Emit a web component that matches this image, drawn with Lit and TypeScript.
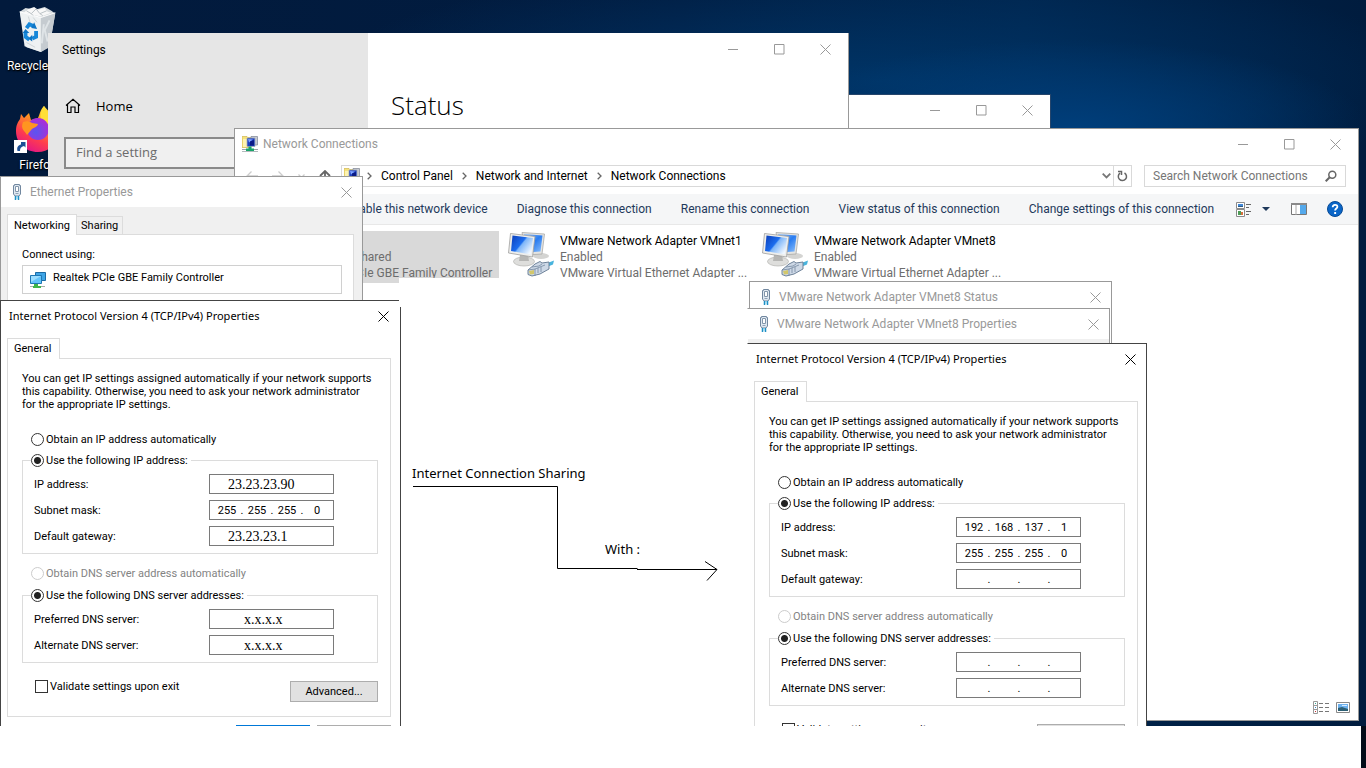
import { LitElement, html, css, svg, nothing } from "lit";
import { customElement, property } from "lit/decorators.js";
import { classMap } from "lit/directives/class-map.js";

const base = css`
  :host {
    display: block;
    box-sizing: border-box;
    font: 12px/16px Roboto, "Open Sans", sans-serif;
    color: #000;
  }
  *,
  *::before,
  *::after {
    box-sizing: border-box;
  }
  button,
  input {
    font: inherit;
    color: inherit;
    margin: 0;
  }
  button {
    border: 0;
    padding: 0;
    background: none;
    white-space: nowrap;
  }
  svg {
    display: block;
    flex: none;
  }
  p,
  h1,
  h2,
  figure {
    margin: 0;
    font: inherit;
  }
`;

const minimizeIcon = svg`<svg width="10" height="11" viewBox="0 0 10 11"><path d="M0 5.5h10" stroke="currentColor" fill="none"/></svg>`;
const maximizeIcon = svg`<svg width="11" height="11" viewBox="0 0 11 11"><path d="M.5 .5h9.500v9.500h-9.500z" stroke="currentColor" fill="none"/></svg>`;
const closeIcon = svg`<svg width="11" height="11" viewBox="0 0 11 11"><path d="M.5 .5l10 10M10.500 .5l-10 10" stroke="currentColor" fill="none"/></svg>`;

const plugIcon = svg`<svg width="10" height="16" viewBox="0 0 10 16">
  <path d="M2.500 .5h5v1h1v8.500l-1.500 2h-4L1.500 10V1.500h1z" fill="#dfe8f1" stroke="#71879f"/>
  <path d="M3.500 2.500h3v5h-3z" fill="#fff" stroke="#8296ab"/>
  <path d="M3.500 9.500h3" stroke="#8fa3b7"/>
  <path d="M3.500 12v4M6.500 12v4" stroke="#1f8fc4" stroke-width="1.500"/>
  <path d="M5 12v3" stroke="#7fd0f0"/></svg>`;

const networkFolderIcon = svg`<svg width="16" height="16" viewBox="0 0 16 16">
  <path d="M0 .5h5l1 1h3v10H0z" fill="#f5e27c" stroke="#c9ad3f" stroke-width=".6"/>
  <path d="M1 3h4v8H1z" fill="#fdf3b0"/>
  <path d="M9 .5h6.500v8.500H9z" fill="#c6cad2" stroke="#7d8492" stroke-width=".7"/>
  <path d="M5 2h8v8.500H5z" fill="#1b3fc0" stroke="#a5acb8" stroke-width=".8"/>
  <path d="M6 3l5 .5-4 3z" fill="#7fa4ff"/>
  <path d="M8 5.500l4-1.500v5.500H8z" fill="#0a1a86"/>
  <path d="M6.500 10.500h3v2H12v2.500H4v-2.500h2.500z" fill="#19a56a"/>
  <path d="M0 13h4v1H0zM12 13h4v1h-4zM0 15h16v.8H0z" fill="#9aa4a8"/></svg>`;

const adapterIcon = svg`<svg width="48" height="48" viewBox="0 0 48 48">
  <defs>
    <linearGradient id="scr" x1="0" y1="0" x2="1" y2=".7">
      <stop offset="0" stop-color="#0a3cb8"/><stop offset=".5" stop-color="#1c6dee"/>
      <stop offset=".56" stop-color="#7db5f8"/><stop offset="1" stop-color="#f0f7ff"/>
    </linearGradient>
    <linearGradient id="scr2" x1="0" y1="0" x2="1" y2="1">
      <stop offset="0" stop-color="#9cc5f6"/><stop offset=".5" stop-color="#2a7cf0"/><stop offset="1" stop-color="#8fc2fb"/>
    </linearGradient>
  </defs>
  <ellipse cx="34" cy="25" rx="8" ry="3" fill="#d4d4d2"/>
  <path d="M15 1.500l22.500 1.500-2.500 20-16 1z" fill="#e4e4e2" stroke="#a9a9a7" stroke-width=".8"/>
  <path d="M17 3l18.500 1.500-2 16-15 1z" fill="url(#scr2)"/>
  <ellipse cx="17" cy="30.500" rx="10.500" ry="4.500" fill="#dededc" stroke="#b4b4b2" stroke-width=".7"/>
  <path d="M13 24h8l1 6H12z" fill="#b6b6b4"/>
  <path d="M3.500 2.500l24.500 3-2.500 20.500L1.500 22z" fill="#eeeeec" stroke="#a0a09e" stroke-width=".8"/>
  <path d="M5.500 4.500l20.500 2.500-2 16.500-20-3.500z" fill="url(#scr)"/>
  <path d="M38 33l9-3.500-1 4-6 2.500z" fill="#49b4dd"/>
  <path d="M21 39l7-6 5-2.500 2 1.500 7-1v7l-9 5-8 2-4-1.500z" fill="#cdd8e6" stroke="#6e8299"/>
  <path d="M21 39l7-1v7M28 38l10-4M25 36l7-1 3-2M31 37v5M34 36v5" stroke="#7488a0" fill="none" stroke-width=".8"/>
  <path d="M22 40l5-1v4l-4 .5z" fill="#d2c76b"/></svg>`;

const nicIcon = svg`<svg width="16" height="16" viewBox="0 0 16 16">
  <path d="M5.500 .5h10v8h-10z" fill="#3fa5e6" stroke="#1b6ba5"/>
  <path d="M.5 3.500h11v8H.5z" fill="#64c4fa" stroke="#1f77b4"/>
  <path d="M1 4h10L1 10z" fill="#9cddff"/>
  <path d="M4 12h4v2h3v2H3v-2h1z" fill="#3fb54a"/>
  <path d="M0 14h3v1H0zM11 14h4v1h-4z" fill="#a8b0a8"/></svg>`;

/** Title bar shared by every window on the desktop. */
@customElement("title-bar")
class TitleBar extends LitElement {
  @property() label = "";
  @property() icon = "";
  @property({ type: Boolean }) active = false;
  @property({ type: Boolean }) resizable = false;

  static styles = [
    base,
    css`
      .bar {
        display: flex;
        align-items: center;
        height: 30px;
        gap: 5px;
        color: #999;
      }
      .active {
        color: #000;
      }
      .active .name {
        font: 11px/16px "Noto Sans", sans-serif;
      }
      .icon {
        width: 16px;
        display: grid;
        place-items: center;
        margin-left: 8px;
      }
      .network {
        margin-left: 7px;
      }
      .name {
        white-space: nowrap;
      }
      .name:first-child {
        margin-left: 8px;
      }
      .controls {
        display: flex;
        margin-left: auto;
      }
      .controls button {
        width: 46px;
        height: 30px;
        display: grid;
        place-items: center;
      }
      .small button {
        width: 32px;
      }
    `,
  ];

  render() {
    const icons: Record<string, unknown> = { plug: plugIcon, network: networkFolderIcon };
    return html`<div class=${classMap({ bar: true, active: this.active })}>
      ${this.icon ? html`<span class="icon ${this.icon}">${icons[this.icon]}</span>` : nothing}
      <h2 class="name">${this.label}</h2>
      <div class=${classMap({ controls: true, small: !this.resizable })}>
        ${this.resizable
          ? html`<button aria-label="Minimize">${minimizeIcon}</button>
              <button aria-label="Maximize">${maximizeIcon}</button>`
          : nothing}
        <button aria-label="Close">${closeIcon}</button>
      </div>
    </div>`;
  }
}

interface Field {
  label: string;
  octets?: string[];
  note?: string;
}

/** Internet Protocol Version 4 property sheet. */
@customElement("ip-properties")
class IpProperties extends LitElement {
  @property({ attribute: false }) address: Field[] = [];
  @property({ attribute: false }) dns: Field[] = [];

  static styles = [
    base,
    css`
      :host {
        background: #f0f0f0;
      }
      title-bar {
        background: #fff;
      }
      .body {
        padding: 7px 8px 9px 6px;
        font-size: 11px;
        line-height: 13px;
      }
      .tab {
        display: block;
        position: relative;
        height: 21px;
        padding: 0 8px 1px 6px;
        border: 1px solid #dcdcdc;
        border-bottom: 0;
        background: #fff;
        margin-bottom: -1px;
        z-index: 1;
      }
      .panel {
        background: #fff;
        border: 1px solid #dcdcdc;
        padding: 13px 12px 14px 14px;
      }
      .intro {
        margin-bottom: 22px;
        white-space: nowrap;
      }
      label.choice {
        display: flex;
        align-items: center;
        gap: 2px;
        height: 13px;
        width: max-content;
      }
      .choice.lone {
        margin-left: 9px;
      }
      .choice.off {
        color: #838383;
      }
      .dns {
        margin-top: 13px;
      }
      input[type="radio"],
      input[type="checkbox"] {
        appearance: none;
        width: 13px;
        height: 13px;
        border: 1px solid #333;
        background: #fff;
      }
      input[type="radio"] {
        border-radius: 50%;
      }
      input[type="radio"]:checked {
        background: radial-gradient(circle, #222 0 3px, #fff 4px);
      }
      input[type="radio"]:disabled {
        border-color: #ccc;
      }
      fieldset {
        margin: 8px 0 0;
        min-width: 0;
        border: 1px solid #dcdcdc;
        padding: 7px 43px 7px 8px;
        display: grid;
        gap: 6px;
      }
      .dns + fieldset {
        margin-top: 9px;
      }
      legend {
        padding: 0 3px 0 0;
        background: #fff;
      }
      .row {
        display: flex;
        align-items: center;
        justify-content: space-between;
        padding-left: 3px;
        height: 20px;
      }
      .octets,
      .note {
        width: 125px;
        height: 20px;
        border: 1px solid #7a7a7a;
        background: #fff;
      }
      .octets {
        display: flex;
        align-items: center;
        padding: 0 4px 0 5px;
      }
      .octets input {
        flex: 1;
        min-width: 0;
        border: 0;
        padding: 0;
        background: none;
        text-align: center;
        height: 16px;
      }
      .octets i {
        width: 6px;
        font-style: normal;
        text-align: center;
      }
      .note {
        font: 14px/18px "Liberation Serif", serif;
        padding: 2px 0 0 18px;
      }
      .note.server {
        padding-left: 34px;
      }
      .foot {
        display: flex;
        justify-content: space-between;
        align-items: flex-start;
        margin-top: 17px;
        padding-left: 13px;
      }
      .foot .btn {
        width: 88px;
        margin-top: 1px;
      }
      .btn {
        height: 21px;
        border: 1px solid #adadad;
        background: #e1e1e1;
      }
      .actions {
        display: flex;
        justify-content: flex-end;
        gap: 7px;
        margin-top: 8px;
      }
      .actions .btn {
        width: 74px;
      }
      .actions .primary {
        border: 2px solid #0078d7;
      }
    `,
  ];

  private row(f: Field, i: number, group: string) {
    const id = `${group}${i}`;
    return html`<div class="row">
      <label for=${id}>${f.label}</label>
      ${f.note
        ? html`<input class=${classMap({ note: true, server: group === "dns" })} id=${id} .value=${f.note} />`
        : html`<span class="octets"
            >${[0, 1, 2, 3].map(
              (n) => html`${n ? html`<i>.</i>` : nothing}<input
                  id=${n ? `${id}-${n}` : id}
                  aria-label="${f.label} ${n + 1}"
                  .value=${f.octets?.[n] ?? ""}
                />`
            )}</span
          >`}
    </div>`;
  }

  render() {
    return html`
      <title-bar label="Internet Protocol Version 4 (TCP/IPv4) Properties" active></title-bar>
      <div class="body">
        <button class="tab">General</button>
        <div class="panel">
          <p class="intro">
            You can get IP settings assigned automatically if your network supports<br />
            this capability. Otherwise, you need to ask your network administrator<br />
            for the appropriate IP settings.
          </p>
          <label class="choice lone"><input type="radio" name="ip" />Obtain an IP address automatically</label>
          <fieldset>
            <legend>
              <label class="choice"><input type="radio" name="ip" checked />Use the following IP address:</label>
            </legend>
            ${this.address.map((f, i) => this.row(f, i, "ip"))}
          </fieldset>
          <label class="choice lone dns off"
            ><input type="radio" name="dns" disabled />Obtain DNS server address automatically</label
          >
          <fieldset>
            <legend>
              <label class="choice"><input type="radio" name="dns" checked />Use the following DNS server addresses:</label>
            </legend>
            ${this.dns.map((f, i) => this.row(f, i, "dns"))}
          </fieldset>
          <div class="foot">
            <label class="choice"><input type="checkbox" />Validate settings upon exit</label>
            <button class="btn">Advanced...</button>
          </div>
        </div>
        <div class="actions"><button class="btn primary">OK</button><button class="btn">Cancel</button></div>
      </div>
    `;
  }
}

@customElement("app-root")
class AppRoot extends LitElement {
  static styles = [
    base,
    css`
      .desktop {
        position: relative;
        height: 100vh;
        min-height: 768px;
        overflow: hidden;
        background:
          radial-gradient(ellipse 300px 90px at 1070px 130px, #003f7c 0%, #003f7c00 100%),
          radial-gradient(ellipse 560px 120px at 880px 80px, #003466 0%, #00346600 100%),
          linear-gradient(90deg, #021a3c 0%, #011c40 50%, #00244c 75%, #001c3e 100%);
      }
      .window {
        position: absolute;
        background: #fff;
        border: 1px solid #999;
        overflow: hidden;
      }

      .shortcut {
        position: absolute;
        display: grid;
        justify-items: center;
        gap: 4px;
        width: 75px;
        color: #fff;
        text-decoration: none;
        text-shadow: 1px 1px 1px #000, 0 1px 2px #000;
      }
      .recycle {
        left: 0;
        top: 6px;
      }
      .firefox {
        left: 0;
        top: 105px;
      }

      .settings {
        left: 48px;
        top: 33px;
        width: 801px;
        height: 500px;
        border-width: 0 1px 0 0;
        display: grid;
        grid-template-columns: 320px 1fr;
      }
      .sidebar {
        background: #e6e6e6;
        padding: 9px 16px;
      }
      .title {
        margin-left: -2px;
      }
      .home {
        display: flex;
        align-items: center;
        gap: 14px;
        margin-top: 38px;
        height: 20px;
        font: 13px/20px "Open Sans", sans-serif;
        color: #000;
        text-decoration: none;
      }
      .find {
        display: block;
        width: 100%;
        height: 32px;
        margin-top: 21px;
        padding: 0 10px 2px;
        border: 2px solid #8a8a8a;
        background: #f0f0f0;
        font: 13px/20px "Open Sans", sans-serif;
      }
      .find::placeholder {
        color: #6b6b6b;
        opacity: 1;
      }
      .page title-bar {
        margin-top: 1px;
      }
      .page h1 {
        font: 300 26px/36px "Open Sans", sans-serif;
        padding: 23px 23px;
      }

      .second {
        left: 700px;
        top: 94px;
        width: 351px;
        height: 100px;
        border-color: #26456b;
        border-left: 0;
      }

      .network {
        left: 234px;
        top: 128px;
        right: 7px;
        bottom: 47px;
        display: flex;
        flex-direction: column;
      }
      .nav {
        display: flex;
        align-items: center;
        height: 22px;
        margin: 6px 12px 7px 11px;
      }
      .arrows {
        display: flex;
        align-items: center;
        gap: 14px;
        width: 95px;
        color: #ccc;
      }
      .address {
        flex: 1;
        display: flex;
        align-items: center;
        height: 22px;
        border: 1px solid #d9d9d9;
        padding-left: 2px;
      }
      .crumbs {
        display: flex;
        align-items: center;
        gap: 9px;
        margin-left: 7px;
      }
      .crumbs a {
        color: #000;
        text-decoration: none;
      }
      .drop,
      .reload {
        display: grid;
        place-items: center;
        height: 20px;
      }
      .drop {
        margin-left: auto;
        width: 14px;
      }
      .reload {
        width: 18px;
        border-left: 1px solid #d9d9d9;
      }
      .search {
        display: flex;
        align-items: center;
        width: 202px;
        height: 22px;
        margin-left: 12px;
        padding: 0 8px;
        border: 1px solid #d9d9d9;
      }
      .search input {
        flex: 1;
        min-width: 0;
        border: 0;
        padding: 0;
        background: none;
      }
      .search input::placeholder {
        color: #767676;
        opacity: 1;
      }
      .commands {
        display: flex;
        align-items: center;
        justify-content: space-between;
        height: 31px;
        padding: 0 15px 0 31px;
        background: #f5f6f7;
        border-bottom: 1px solid #e8e8e8;
        color: #1e395b;
      }
      .tasks {
        display: flex;
        gap: 29px;
      }
      .view {
        display: flex;
        align-items: center;
      }
      .caret {
        margin: 0 21px 0 10px;
      }
      .help {
        margin-left: 20px;
      }
      .items {
        flex: 1;
        display: grid;
        grid-template-columns: repeat(auto-fill, 246px);
        column-gap: 8px;
        align-content: start;
        padding: 6px 18px;
      }
      .item {
        display: flex;
        gap: 5px;
        height: 52px;
        color: #6d6d6d;
      }
      .text {
        padding-top: 2px;
        white-space: nowrap;
      }
      .name {
        color: #000;
      }
      .selected {
        background: #d9d9d9;
      }
      .status {
        display: flex;
        justify-content: flex-end;
        align-items: center;
        gap: 6px;
        height: 26px;
        padding-right: 8px;
      }

      .ethernet {
        left: 0;
        top: 176px;
        width: 363px;
        height: 160px;
        background: #f0f0f0;
      }
      .ethernet title-bar,
      .prop title-bar {
        background: #fff;
      }
      .sheet {
        padding: 7px 8px 0 6px;
        font-size: 11px;
        line-height: 13px;
      }
      .tabs {
        display: flex;
        align-items: flex-end;
      }
      .tabs button {
        height: 18px;
        padding: 0 4px;
        border: 1px solid #dcdcdc;
        border-bottom: 0;
        border-left: 0;
        background: #f0f0f0;
      }
      .tabs .current {
        position: relative;
        height: 21px;
        padding: 0 6px;
        border-left: 1px solid #dcdcdc;
        background: #fff;
        margin-bottom: -1px;
      }
      .panel {
        background: #fff;
        border: 1px solid #dcdcdc;
        padding: 13px 11px 60px 14px;
      }
      .nic {
        display: flex;
        align-items: center;
        gap: 7px;
        height: 29px;
        margin-top: 4px;
        padding: 0 7px 5px;
        border: 1px solid #d0d0d0;
        background: #fff;
      }
      .nic svg {
        margin-top: 5px;
      }

      .canvas {
        position: absolute;
        left: 399px;
        top: 278px;
        width: 349px;
        height: 460px;
        background: #fff;
      }
      .canvas svg {
        position: absolute;
        left: 13px;
        top: 207px;
      }
      .note {
        position: absolute;
        font: 13px/18px "Noto Sans", sans-serif;
        white-space: nowrap;
      }
      .sharing {
        left: 13px;
        top: 186px;
      }
      .with {
        left: 206px;
        top: 262px;
      }
      .frame {
        position: absolute;
        left: 1px;
        top: 29px;
        bottom: 0;
        border-left: 1px solid #444;
      }

      .lan {
        left: 0;
        top: 300px;
        width: 399px;
        border-color: #444;
        border-right: 0;
      }
      .vstatus {
        left: 749px;
        top: 281px;
        width: 363px;
        height: 80px;
      }
      .prop {
        left: 747px;
        top: 308px;
        width: 363px;
        height: 80px;
        background: #f0f0f0;
        border-left-color: #fff;
      }
      .vmnet {
        left: 747px;
        top: 343px;
        width: 400px;
        height: 384px;
        border-color: #444;
        border-left-color: #fff;
        border-bottom: 0;
      }
      .taskbar {
        position: absolute;
        left: 0;
        right: 0;
        bottom: 0;
        height: 42px;
        background: #fff;
        border-right: 5px solid #020b18;
      }
    `,
  ];

  render() {
    const chevron = svg`<svg width="5" height="8" viewBox="0 0 5 8"><path d="M.7 .8L4 4 .7 7.200" fill="none" stroke="#666" stroke-width="1.300"/></svg>`;
    return html`<main class="desktop">
      <a class="shortcut recycle" href="#">
        <svg width="44" height="48" viewBox="0 0 44 50">
          <path d="M3 6l6-4 10 2 10-3 7 4 4 3-6 34-9 6-15-5z" fill="#d5dadd" />
          <path d="M3 6l5 36 17 6V12z" fill="#eef1f2" />
          <path d="M25 12l15-5-6 36-9 5z" fill="#c5cbd0" />
          <path d="M3 6l22 6 15-5" fill="none" stroke="#fff" />
          <path d="M7 7l5-4 6-2 4 3 7-2 3 4 4 1-11 4z" fill="#f8f8f8" />
          <path d="M10 5l5 3 5-5 4 5 7-3M15 8l2 2M24 8l3 2" fill="none" stroke="#b9c0c4" />
          <path d="M12 11l2 7M17 12l4 5M10 38l9 5" stroke="#cdd3d6" fill="none" />
          <path d="M28 19l-2 20M34 15l-5 10 3 12" fill="none" stroke="#dfe4e7" stroke-width="2" />
          <g fill="none" stroke="#1687d9" stroke-width="4">
            <path d="M10 23l3-4 5 2" /><path d="M20 26l0 6-4 2" /><path d="M13 35l-4-3 0-4" />
          </g>
          <path d="M18 17l3 7-6-1zM16 30v7l-4-3zM6 28l3-4 4 4z" fill="#0f76c6" />
        </svg>
        <span>Recycle Bin</span>
      </a>
      <a class="shortcut firefox" href="#">
        <svg width="48" height="48" viewBox="0 0 48 48">
          <defs>
            <linearGradient id="fx" x1=".8" y1="0" x2=".3" y2="1">
              <stop offset="0" stop-color="#fff14a" /><stop offset=".35" stop-color="#ff9a1f" />
              <stop offset=".7" stop-color="#ff3d4d" /><stop offset="1" stop-color="#e31587" />
            </linearGradient>
            <radialGradient id="globe" cx=".4" cy=".65" r=".6">
              <stop offset="0" stop-color="#5a55f0" /><stop offset="1" stop-color="#a72fd8" />
            </radialGradient>
          </defs>
          <path d="M30 1c3 4 7 7 11 12 4 5 5 10 4 17-2 10-11 17-21 17C11 47 2 38 2 26c0-6 2-9 4-12l1-5 3 4 5-5 2 7 7-2c2-4 2-8 6-12z" fill="url(#fx)" />
          <path d="M30 1c-4 6-5 12-1 17l12 6c3-7-6-13-11-23z" fill="#ffdf38" />
          <circle cx="24" cy="24" r="11" fill="url(#globe)" />
          <path d="M9 17c3-1 6-1 9 1l6 1c0 2-4 4-6 5-2 2-3 4-5 6-2-4-7-6-4-13z" fill="#ff9520" />
          <path d="M0 35h13v13H0z" fill="#fff" />
          <path d="M3.500 46c-1-4 1-6 3.500-6.500V37h4.500v5.500l-1.500-1.500C7 42 6 43 6 46z" fill="#1c4f96" />
        </svg>
        <span>Firefox</span>
      </a>

      <section class="window second">
        <title-bar resizable></title-bar>
      </section>

      <section class="window settings">
        <div class="sidebar">
          <p class="title">Settings</p>
          <a class="home" href="#">
            <svg width="18" height="16" viewBox="0 0 18 16">
              <path d="M2 7.500L9 1.200l7 6.300M3.500 6.500v8H7V9h4v5.500h3.500v-8" fill="none" stroke="#000" stroke-width="1.200" />
            </svg>
            <span>Home</span>
          </a>
          <input class="find" aria-label="Find a setting" placeholder="Find a setting" />
        </div>
        <div class="page">
          <title-bar resizable></title-bar>
          <h1>Status</h1>
        </div>
      </section>

      <section class="window network">
        <title-bar label="Network Connections" icon="network" resizable></title-bar>
        <div class="nav">
          <div class="arrows">
            <svg width="12" height="10" viewBox="0 0 12 10"><path d="M12 5H1M5.500 .5L1 5l4.500 4.500" fill="none" stroke="currentColor" stroke-width="1.300" /></svg>
            <svg width="12" height="10" viewBox="0 0 12 10"><path d="M0 5h11M6.500 .5L11 5 6.500 9.500" fill="none" stroke="currentColor" stroke-width="1.300" /></svg>
            <svg width="7" height="5" viewBox="0 0 7 5"><path d="M.5 .5l3 3 3-3" fill="none" stroke="currentColor" stroke-width="1.300" /></svg>
            <svg width="12" height="12" viewBox="0 0 12 12"><path d="M6 12V1M1 6l5-5 5 5" fill="none" stroke="#666" stroke-width="1.800" /></svg>
          </div>
          <div class="address">
            ${networkFolderIcon}
            <nav class="crumbs">
              ${["Control Panel", "Network and Internet", "Network Connections"].map(
                (c) => html`${chevron}<a href="#">${c}</a>`
              )}
            </nav>
            <button class="drop" aria-label="Previous locations">
              <svg width="9" height="6" viewBox="0 0 9 6"><path d="M.7 .7l3.800 3.800L8.300 .7" fill="none" stroke="#777" stroke-width="1.800" /></svg>
            </button>
            <button class="reload" aria-label="Refresh">
              <svg width="11" height="12" viewBox="0 0 11 12">
                <path d="M7.500 3A4.100 4.100 0 1 1 3 3.200M1 1.500h3.500V5" fill="none" stroke="#666" stroke-width="1.500" />
              </svg>
            </button>
          </div>
          <div class="search">
            <input type="text" aria-label="Search Network Connections" placeholder="Search Network Connections" />
            <svg width="12" height="12" viewBox="0 0 12 12">
              <circle cx="7.300" cy="4.700" r="3.500" fill="none" stroke="#666" stroke-width="1.500" />
              <path d="M4.700 7.300L.7 11.300" stroke="#666" stroke-width="2" />
            </svg>
          </div>
        </div>
        <div class="commands">
          <div class="tasks">
            ${[
              "Organize",
              "Disable this network device",
              "Diagnose this connection",
              "Rename this connection",
              "View status of this connection",
              "Change settings of this connection",
            ].map((c) => html`<button>${c}</button>`)}
          </div>
          <div class="view">
            <button aria-label="Change view">
              <svg width="16" height="15" viewBox="0 0 16 15">
                <path d="M.5 .5h8v6h-8zM.5 7.500h8v7h-8z" fill="#fff" stroke="#8a8a8a" />
                <path d="M2 2h5v3H2z" fill="#3f87d8" /><path d="M2 4h5v1H2z" fill="#2e5a7d" />
                <path d="M2 9h3v4H2z" fill="#4d9b56" /><path d="M5 10h2v3H5z" fill="#d8703c" />
                <path d="M10 2.500h5M10 5.500h3M10 9.500h5M10 12.500h3" stroke="#666" />
              </svg>
            </button>
            <button class="caret" aria-label="More options">
              <svg width="8" height="4" viewBox="0 0 8 4"><path d="M0 0h8L4 4z" fill="#1e395b" /></svg>
            </button>
            <button aria-label="Preview pane">
              <svg width="16" height="12" viewBox="0 0 16 12">
                <path d="M.5 .5h15v11H.5z" fill="#fff" stroke="#777" />
                <path d="M0 0h16v2H0z" fill="#8a8a8a" /><path d="M5 2v10" stroke="#aaa" />
                <path d="M9 2h6v9H9z" fill="#54a9ec" />
              </svg>
            </button>
            <button class="help" aria-label="Help">
              <svg width="16" height="16" viewBox="0 0 16 16">
                <circle cx="8" cy="8" r="7.500" fill="#0b66c8" stroke="#084a94" />
                <path d="M5.700 6.300C5.700 3 10.400 3.200 10.400 5.800c0 1.700-2.300 1.800-2.300 3.700" fill="none" stroke="#fff" stroke-width="1.800" />
                <path d="M7.200 11h1.900v2H7.200z" fill="#fff" />
              </svg>
            </button>
          </div>
        </div>
        <div class="items">
          ${[
            ["Ethernet", "Enabled, Shared", "Realtek PCIe GBE Family Controller"],
            ["VMware Network Adapter VMnet1", "Enabled", "VMware Virtual Ethernet Adapter ..."],
            ["VMware Network Adapter VMnet8", "Enabled", "VMware Virtual Ethernet Adapter ..."],
          ].map(
            ([name, state, device], i) => html`<div class=${classMap({ item: true, selected: i === 0 })}>
              ${adapterIcon}
              <div class="text">
                <p class="name">${name}</p>
                <p>${state}</p>
                <p>${device}</p>
              </div>
            </div>`
          )}
        </div>
        <div class="status">
          <svg width="17" height="13" viewBox="0 0 17 13">
            <path d="M.5 .5h4v12h-4zM.5 4.500h4M.5 8.500h4" fill="#fff" stroke="#999" />
            <path d="M2 2h1v1H2z" fill="#3a9" /><path d="M2 6h1v1H2z" fill="#38c" /><path d="M2 10h1v1H2z" fill="#c33" />
            <path d="M6 2.500h4M12 2.500h4M6 6.500h4M12 6.500h4M6 10.500h4M12 10.500h4" stroke="#777" />
          </svg>
          <svg width="14" height="11" viewBox="0 0 14 11">
            <path d="M.5 .5h13v10H.5z" fill="#fff" stroke="#888" />
            <path d="M2 2h10v7H2z" fill="#6db1ee" /><path d="M2 6l4-1 6 2v2H2z" fill="#2c5f74" />
            <path d="M6 3h5v1H6z" fill="#d6ecff" />
          </svg>
        </div>
      </section>

      <section class="window ethernet">
        <title-bar label="Ethernet Properties" icon="plug"></title-bar>
        <div class="sheet">
          <div class="tabs"><button class="current">Networking</button><button>Sharing</button></div>
          <div class="panel">
            <p>Connect using:</p>
            <div class="nic">${nicIcon}<span>Realtek PCIe GBE Family Controller</span></div>
          </div>
        </div>
      </section>

      <figure class="canvas">
        <div class="frame"></div>
        <p class="note sharing">Internet Connection Sharing</p>
        <svg width="308" height="98" viewBox="0 0 308 98">
          <path d="M1 1.500h144.500v82h80M225 84.500h80M293 76.500l12 8-10 11" fill="none" stroke="#000" />
        </svg>
        <p class="note with">With :</p>
      </figure>

      <ip-properties
        class="window lan"
        .address=${[
          { label: "IP address:", note: "23.23.23.90" },
          { label: "Subnet mask:", octets: ["255", "255", "255", "0"] },
          { label: "Default gateway:", note: "23.23.23.1" },
        ]}
        .dns=${[
          { label: "Preferred DNS server:", note: "x.x.x.x" },
          { label: "Alternate DNS server:", note: "x.x.x.x" },
        ]}
      ></ip-properties>

      <section class="window vstatus">
        <title-bar label="VMware Network Adapter VMnet8 Status" icon="plug"></title-bar>
      </section>
      <section class="window prop">
        <title-bar label="VMware Network Adapter VMnet8 Properties" icon="plug"></title-bar>
      </section>
      <ip-properties
        class="window vmnet"
        .address=${[
          { label: "IP address:", octets: ["192", "168", "137", "1"] },
          { label: "Subnet mask:", octets: ["255", "255", "255", "0"] },
          { label: "Default gateway:" },
        ]}
        .dns=${[{ label: "Preferred DNS server:" }, { label: "Alternate DNS server:" }]}
      ></ip-properties>

      <footer class="taskbar"></footer>
    </main>`;
  }
}
